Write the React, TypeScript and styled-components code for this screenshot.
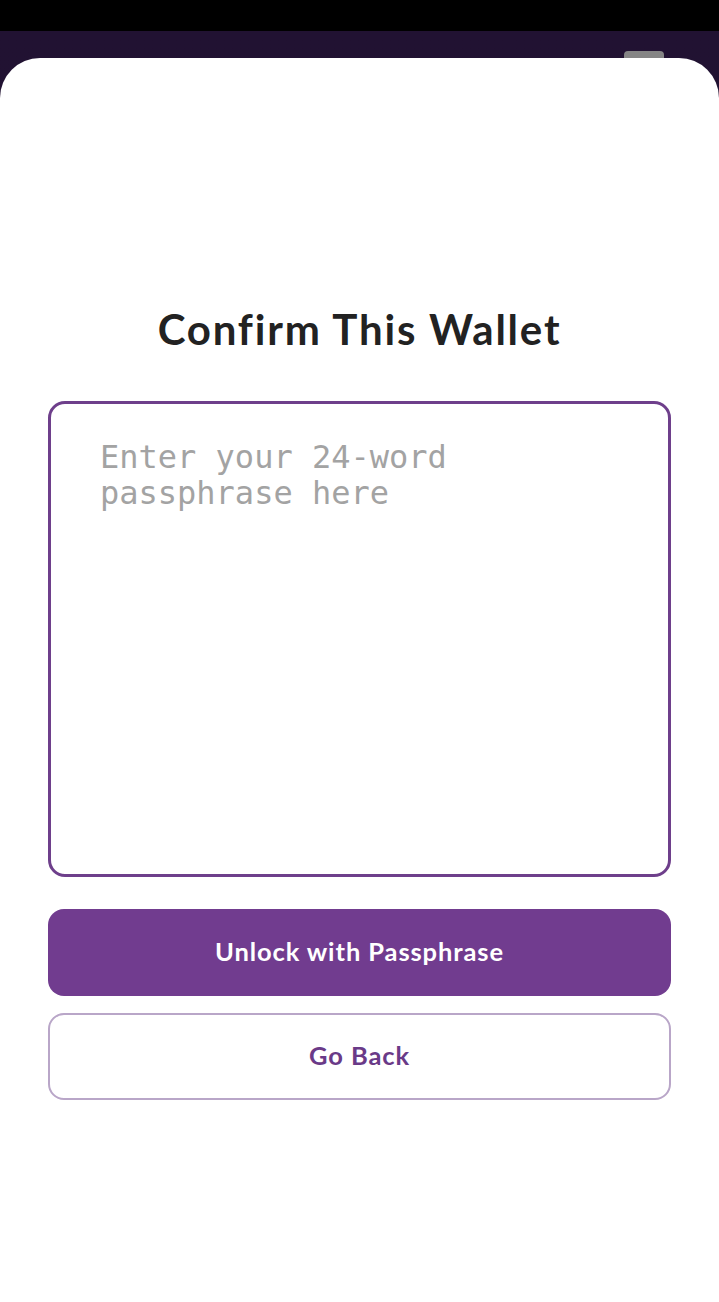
import React from "react";
import styled, { createGlobalStyle } from "styled-components";

const GlobalStyle = createGlobalStyle`
  html, body {
    margin: 0;
    padding: 0;
    background: #000;
  }
  * { box-sizing: border-box; }
`;

const Screen = styled.div`
  width: 719px;
  height: 1302px;
  display: flex;
  flex-direction: column;
  overflow: hidden;
`;

const StatusBar = styled.div`
  height: 31px;
  background: #000;
  flex-shrink: 0;
`;

const Backdrop = styled.div`
  flex: 1;
  position: relative;
  display: flex;
  flex-direction: column;
  padding-top: 27px;
  background: linear-gradient(180deg, #211232 0%, #22102d 100%);
`;

const Handle = styled.div`
  position: absolute;
  top: 20px;
  right: 55px;
  width: 40px;
  height: 16px;
  border-radius: 4px;
  background: #858585;
`;

const Sheet = styled.div`
  position: relative;
  flex: 1;
  background: #fff;
  border-radius: 40px 40px 0 0;
  display: flex;
  flex-direction: column;
  align-items: stretch;
  padding: 248px 48px 0;
`;

const Title = styled.h1`
  margin: 0;
  text-align: center;
  font-family: Lato, "Open Sans", sans-serif;
  font-weight: 700;
  font-size: 42px;
  letter-spacing: 1.8px;
  line-height: 47px;
  color: #222222;
`;

const Phrase = styled.textarea`
  margin-top: 48px;
  height: 476px;
  width: 100%;
  resize: none;
  border: 3px solid #6e3f8b;
  border-radius: 17px;
  padding: 35px 48px 0 49px;
  font-family: "DejaVu Sans Mono", "Liberation Mono", monospace;
  font-size: 32px;
  line-height: 36px;
  color: #333;
  outline: none;
  background: #fff;
  &::placeholder {
    color: #a3a3a3;
  }
`;

const Button = styled.button<{ $variant: "primary" | "outline" }>`
  height: 87px;
  width: 100%;
  border-radius: 16px;
  padding: 0 0 3px;
  font-family: Lato, "Open Sans", sans-serif;
  font-weight: 700;
  font-size: 25.5px;
  letter-spacing: 0.9px;
  cursor: pointer;
  border: ${(p) => (p.$variant === "primary" ? "none" : "2px solid #b9a6c8")};
  background: ${(p) => (p.$variant === "primary" ? "#713c8f" : "#fff")};
  color: ${(p) => (p.$variant === "primary" ? "#ffffff" : "#6a3a88")};
`;

const Actions = styled.div`
  margin-top: 32px;
  display: flex;
  flex-direction: column;
  gap: 17px;
`;

export default function App() {
  return (
    <>
      <GlobalStyle />
      <Screen>
        <StatusBar />
        <Backdrop>
          <Handle />
          <Sheet>
            <Title>Confirm This Wallet</Title>
            <Phrase placeholder="Enter your 24-word passphrase here" />
            <Actions>
              <Button $variant="primary">Unlock with Passphrase</Button>
              <Button $variant="outline">Go Back</Button>
            </Actions>
          </Sheet>
        </Backdrop>
      </Screen>
    </>
  );
}
